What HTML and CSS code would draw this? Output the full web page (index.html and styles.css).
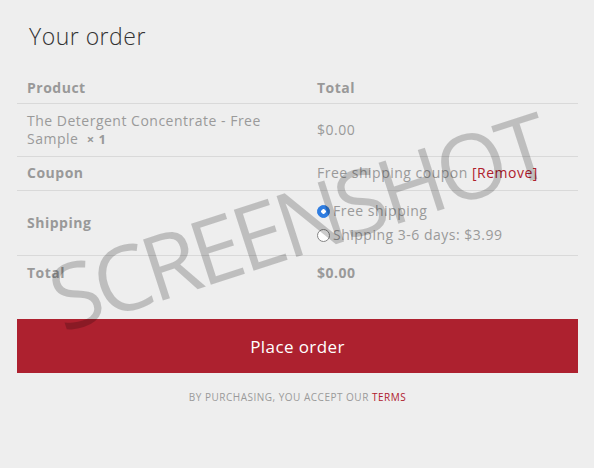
FILE: index.html
```html
<!DOCTYPE html>
<html lang="en">
<head>
    <meta charset="UTF-8">
    <meta name="viewport" content="width=device-width, initial-scale=1.0">
    <title>Your order</title>
    <link rel="stylesheet" href="styles.css">
</head>
<body>

<div class="checkout">
    <h3 class="order-title">Your order</h3>

    <!--resumen del pedido-->
    <table class="order-table">
        <thead>
            <tr>
                <th class="col-product">Product</th>
                <th>Total</th>
            </tr>
        </thead>
        <tbody>
            <tr>
                <td>The Detergent Concentrate - Free Sample&nbsp; <strong class="qty">&times;&nbsp;1</strong></td>
                <td>$0.00</td>
            </tr>
            <tr class="coupon-row">
                <th>Coupon</th>
                <td>Free shipping coupon <a href="#" class="remove">[Remove]</a></td>
            </tr>
            <tr>
                <th>Shipping</th>
                <td>
                    <ul class="shipping-list">
                        <li><label><input type="radio" name="ship" checked>Free shipping</label></li>
                        <li><label><input type="radio" name="ship">Shipping 3-6 days: $3.99</label></li>
                    </ul>
                </td>
            </tr>
            <tr>
                <th>Total</th>
                <td><strong>$0.00</strong></td>
            </tr>
        </tbody>
    </table>

    <button class="place-order">Place order</button>

    <p class="terms">By purchasing, you accept our <a href="#">terms</a></p>
</div>

<div class="watermark">SCREENSHOT</div>

</body>
</html>
```

FILE: styles.css
```css
body {
    margin: 0;
    background: #eeeeee;
    font-family: "Open Sans", "Liberation Sans", sans-serif;
    color: #9a9a9a;
}

.checkout {
    padding: 0 16px 0 17px;
}

.order-title {
    margin: 0;
    padding: 22px 0 19px 12px;
    font-size: 23px;
    font-weight: 300;
    line-height: 28px;
    letter-spacing: 0.5px;
    color: #333;
}

.order-table {
    width: 100%;
    border-collapse: collapse;
    font-size: 14px;
    line-height: 18px;
    letter-spacing: 0.5px;
}

.order-table th,
.order-table td {
    text-align: left;
    vertical-align: middle;
    padding: 8px 10px;
}

.order-table thead th {
    padding: 10px 10px 6px;
}

.order-table .coupon-row th,
.order-table .coupon-row td {
    padding: 7px 10px 8px;
}

.order-table th {
    font-weight: 700;
    color: #999;
}

.order-table tbody tr {
    border-top: 1px solid #d9d9d9;
}

.col-product {
    width: 270px;
}

.qty {
    font-size: 13px;
}

.remove {
    color: #b0202d;
    text-decoration: none;
}

.shipping-list {
    list-style-type: none;
    margin: 0;
    padding: 0;
}

.shipping-list li {
    height: 24px;
    display: flex;
    align-items: center;
}

.shipping-list label {
    display: flex;
    align-items: center;
}

.shipping-list input {
    appearance: none;
    margin: 0 3px 0 0;
    width: 13px;
    height: 13px;
    border-radius: 50%;
    border: 1px solid #858585;
    background: #fff;
}

.shipping-list input:checked {
    border-color: #2f7de1;
    background: radial-gradient(circle, #fff 0 2px, #2f7de1 2.5px);
}

.place-order {
    display: block;
    width: 100%;
    height: 54px;
    margin-top: 29px;
    border: 0;
    background: #ad212f;
    color: #fff;
    font-family: "Open Sans", "Liberation Sans", sans-serif;
    font-size: 17px;
    letter-spacing: 0.4px;
}

.terms {
    margin: 17px 0 0;
    text-align: center;
    text-transform: uppercase;
    font-size: 10px;
    letter-spacing: 0.5px;
    color: #9a9a9a;
}

.terms a {
    color: #b0202d;
    text-decoration: none;
}

.watermark {
    position: absolute;
    left: 297px;
    top: 220px;
    transform: translate(-50%, -50%) rotate(-18deg);
    font-size: 90px;
    font-weight: 500;
    letter-spacing: -5px;
    color: rgba(0, 0, 0, 0.2);
    pointer-events: none;
    white-space: nowrap;
}
```
